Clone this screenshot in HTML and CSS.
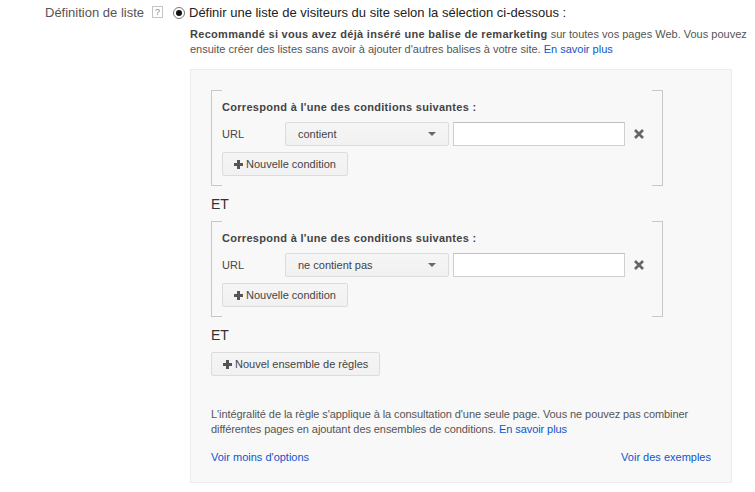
FILE: index.html
```html
<!DOCTYPE html>
<html lang="fr">
<head>
    <meta charset="UTF-8">
    <title>Définition de liste</title>
    <link rel="stylesheet" href="styles.css">
</head>
<body>

<div class="field">
    <div class="field-label">
        Définition de liste
        <span class="help">?</span>
    </div>

    <div class="field-body">
        <label class="option">
            <span class="radio checked"></span>
            Définir une liste de visiteurs du site selon la sélection ci-dessous :
        </label>

        <p class="description">
            <strong>Recommandé si vous avez déjà inséré une balise de remarketing</strong> sur toutes vos pages Web. Vous pouvez
            ensuite créer des listes sans avoir à ajouter d'autres balises à votre site. <a href="#">En savoir plus</a>
        </p>

        <div class="panel">
            <div class="rule-group">
                <div class="rule-title">Correspond à l'une des conditions suivantes :</div>
                <div class="rule-row">
                    <span class="rule-field">URL</span>
                    <div class="select">
                        <span>contient</span>
                        <span class="caret"></span>
                    </div>
                    <input type="text" class="rule-value">
                    <svg class="remove" width="12" height="12" viewBox="0 0 12 12">
                        <path d="M2 2 L10 10 M10 2 L2 10" stroke="#666" stroke-width="2.6"/>
                    </svg>
                </div>
                <button class="btn">
                    <svg class="plus" width="9" height="9" viewBox="0 0 9 9"><path d="M3 0h3v3h3v3H6v3H3V6H0V3h3z" fill="#555"/></svg>
                    Nouvelle condition
                </button>
            </div>

            <div class="and">ET</div>

            <div class="rule-group">
                <div class="rule-title">Correspond à l'une des conditions suivantes :</div>
                <div class="rule-row">
                    <span class="rule-field">URL</span>
                    <div class="select">
                        <span>ne contient pas</span>
                        <span class="caret"></span>
                    </div>
                    <input type="text" class="rule-value">
                    <svg class="remove" width="12" height="12" viewBox="0 0 12 12">
                        <path d="M2 2 L10 10 M10 2 L2 10" stroke="#666" stroke-width="2.6"/>
                    </svg>
                </div>
                <button class="btn">
                    <svg class="plus" width="9" height="9" viewBox="0 0 9 9"><path d="M3 0h3v3h3v3H6v3H3V6H0V3h3z" fill="#555"/></svg>
                    Nouvelle condition
                </button>
            </div>

            <div class="and">ET</div>

            <button class="btn">
                <svg class="plus" width="9" height="9" viewBox="0 0 9 9"><path d="M3 0h3v3h3v3H6v3H3V6H0V3h3z" fill="#555"/></svg>
                Nouvel ensemble de règles
            </button>

            <p class="note">
                L'intégralité de la règle s'applique à la consultation d'une seule page. Vous ne pouvez pas combiner
                différentes pages en ajoutant des ensembles de conditions. <a href="#">En savoir plus</a>
            </p>

            <div class="panel-links">
                <a href="#">Voir moins d'options</a>
                <a href="#">Voir des exemples</a>
            </div>
        </div>
    </div>
</div>

</body>
</html>
```

FILE: styles.css
```css
body {
    margin: 0;
    font-family: "Liberation Sans", Arial, sans-serif;
    color: #444;
    background-color: #fff;
    overflow: hidden;
}

a {
    color: #15c;
    text-decoration: none;
}

.field {
    display: flex;
    padding: 5px 0 0 45px;
}

.field-label {
    display: flex;
    align-items: flex-start;
    gap: 8px;
    font-size: 13px;
    line-height: 16px;
    color: #555;
    padding-right: 10px;
}

.help {
    display: inline-block;
    width: 9px;
    height: 10px;
    margin-top: 1px;
    border: 1px solid #c4c4c4;
    font-size: 9px;
    line-height: 10px;
    text-align: center;
    color: #888;
}

.field-body {
    flex: 1;
}

.option {
    display: flex;
    align-items: center;
    gap: 4px;
    font-size: 13px;
    line-height: 16px;
    color: #222;
}

.radio {
    display: inline-block;
    width: 10px;
    height: 10px;
    border: 1px solid #777;
    border-radius: 50%;
    background-color: #fff;
    position: relative;
}

.radio.checked::after {
    content: "";
    position: absolute;
    left: 2px;
    top: 2px;
    width: 6px;
    height: 6px;
    border-radius: 50%;
    background-color: #111;
}

.description {
    margin: 6px 0 0 17px;
    font-size: 11px;
    line-height: 15px;
    color: #555;
}

.description strong {
    color: #444;
    letter-spacing: 0.3px;
}

.panel {
    width: 500px;
    margin: 12px 0 0 17px;
    padding: 20px 20px 17px 20px;
    background-color: #f8f8f8;
    border: 1px solid #ececec;
}

.rule-group {
    position: relative;
    width: 441px;
    padding: 10px 0 10px 11px;
}

.rule-group::before,
.rule-group::after {
    content: "";
    position: absolute;
    top: 0;
    bottom: 0;
    width: 10px;
    border: 1px solid #c8c8c8;
}

.rule-group::before {
    left: 0;
    border-right: none;
}

.rule-group::after {
    right: 0;
    border-left: none;
}

.rule-title {
    font-size: 11px;
    font-weight: bold;
    line-height: 14px;
    letter-spacing: 0.3px;
    color: #444;
    margin-bottom: 8px;
}

.rule-row {
    display: flex;
    align-items: center;
    margin-bottom: 6px;
}

.rule-field {
    width: 63px;
    font-size: 11px;
    color: #444;
}

.select {
    display: flex;
    align-items: center;
    justify-content: space-between;
    box-sizing: border-box;
    width: 164px;
    height: 24px;
    padding: 0 12px 0 12px;
    background: linear-gradient(#f5f5f5, #f1f1f1);
    border: 1px solid #dcdcdc;
    border-radius: 2px;
    font-size: 11px;
    color: #444;
}

.caret {
    width: 0;
    height: 0;
    border-left: 4px solid transparent;
    border-right: 4px solid transparent;
    border-top: 4px solid #666;
}

.rule-value {
    box-sizing: border-box;
    width: 172px;
    height: 24px;
    margin: 0 0 0 4px;
    border: 1px solid #d0d0d0;
    border-top-color: #c0c0c0;
    background-color: #fff;
}

.remove {
    margin-left: 8px;
}

.btn {
    display: inline-flex;
    align-items: center;
    gap: 3px;
    height: 24px;
    padding: 0 11px;
    background: linear-gradient(#f5f5f5, #f1f1f1);
    border: 1px solid #dcdcdc;
    border-radius: 2px;
    font-family: "Liberation Sans", Arial, sans-serif;
    font-size: 11px;
    color: #444;
}

.and {
    font-size: 14px;
    line-height: 16px;
    color: #333;
    margin: 10px 0 9px 0;
}

.note {
    margin: 31px 0 0 0;
    font-size: 11px;
    line-height: 15px;
    letter-spacing: -0.08px;
    color: #555;
}

.panel-links {
    display: flex;
    justify-content: space-between;
    margin-top: 13px;
    font-size: 11px;
    line-height: 15px;
}
```
